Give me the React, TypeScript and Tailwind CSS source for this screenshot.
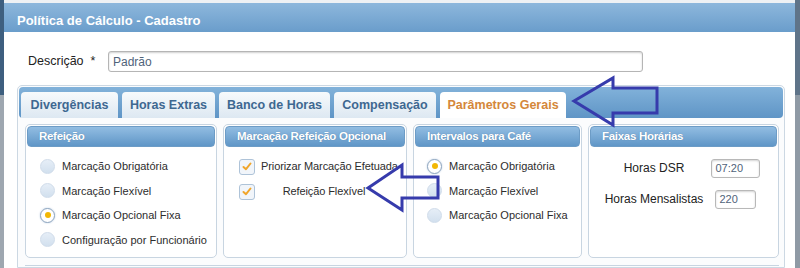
import React from "react";

const font = { fontFamily: '"Liberation Sans", Arial, sans-serif' };

const tabs = [
  { label: "Divergências", w: "w-[97px]" },
  { label: "Horas Extras", w: "w-[93px]" },
  { label: "Banco de Horas", w: "w-[111px]" },
  { label: "Compensação", w: "w-[102px]" },
  { label: "Parâmetros Gerais", w: "w-[126px]", active: true },
];

const Radio = ({ checked, label }: { checked?: boolean; label: string }) => (
  <div className="h-[24.5px] flex items-center gap-[7px]">
    {checked ? (
      <span className="w-[15px] h-[15px] rounded-full border border-[#8fa6bf] bg-white flex items-center justify-center shadow-[0_0_2px_#b9cbe0]">
        <span className="w-[6px] h-[6px] rounded-full bg-[#f2b705]" />
      </span>
    ) : (
      <span className="w-[15px] h-[15px] rounded-full border border-[#d0dcea] bg-gradient-to-b from-[#e6eef7] to-[#d2e0ee]" />
    )}
    <span className="text-[11px] text-[#2d2d2d] whitespace-nowrap">{label}</span>
  </div>
);

const Check = ({ label }: { label: string }) => (
  <div className="h-[25px] flex items-center">
    <span className="w-[16px] h-[16px] rounded-[3px] border border-[#aec3d8] bg-[#f1f5fa] flex items-center justify-center">
      <svg width="10" height="9" viewBox="0 0 10 9">
        <path d="M1.5 5 L4 7.2 L8.5 1.5" fill="none" stroke="#f0a52a" strokeWidth="2" strokeLinecap="round" strokeLinejoin="round" />
      </svg>
    </span>
    <span className="ml-[6px] w-[126px] text-center text-[11px] text-[#2d2d2d] whitespace-nowrap tracking-[-0.1px]">{label}</span>
  </div>
);

const Panel = ({ title, w, children }: { title: string; w: string; children: React.ReactNode }) => (
  <div className={`${w} h-[134px] border border-[#c8d5e1] rounded-[5px] p-[1px] bg-white`}>
    <div className="h-[21px] rounded-[4px] bg-gradient-to-b from-[#92bde2] to-[#5f96c7] border border-[#6d9cc6] flex items-center pl-[11px] text-[11.5px] tracking-[-0.3px] font-bold text-white whitespace-nowrap [text-shadow:0_0_1px_#4d7aa3]">
      {title}
    </div>
    {children}
  </div>
);

export default function App() {
  return (
    <div className="relative w-[800px] h-[268px] overflow-hidden flex" style={font}>
      <div className="w-[4px] flex flex-col">
        <div className="h-[95px] bg-[#3e5f7f]" />
        <div className="flex-1 bg-[#9ea7b0]" />
      </div>

      <div className="w-[791px] flex flex-col bg-white">
        <div className="h-[3px] bg-[#eef1f4]" />
        <div className="h-[30px] bg-gradient-to-b from-[#8db7dc] to-[#6a9dcb] flex items-center pl-[13px] pt-[6px] text-[13px] font-bold text-white">
          Política de Cálculo - Cadastro
        </div>

        <div className="mt-[19px] flex items-center pl-[24px]">
          <span className="w-[80px] text-[12.5px] text-[#222]">Descrição&nbsp; *</span>
          <div className="w-[535px] h-[21px] rounded-[3px] border border-[#b5b5b5] shadow-[inset_0_1px_2px_#d0d0d0] flex items-center pl-[4px] text-[12px] text-[#50637a]">
            Padrão
          </div>
        </div>

        <div className="mt-[13px] ml-[13px] w-[768px] flex-1 border border-[#ccd8e3] rounded-t-[5px] p-[1px] bg-[#fbfcfd]">
          <div className="h-[31px] rounded-[4px] bg-gradient-to-b from-[#82b2da] to-[#5f95c6] flex items-end gap-[4px] pl-[2px]">
            {tabs.map((t) => (
              <div
                key={t.label}
                className={`${t.w} h-[26px] rounded-t-[4px] flex items-center justify-center text-[12.5px] font-bold ${
                  t.active
                    ? "bg-white text-[#d4873a]"
                    : "bg-gradient-to-b from-[#f7fafc] to-[#dde8f2] text-[#3e6891]"
                }`}
              >
                {t.label}
              </div>
            ))}
          </div>

          <div className="flex gap-[6px] pl-[6px] pt-[6px]">
            <Panel title="Refeição" w="w-[192px]">
              <div className="pt-[7px] pl-[13px]">
                <Radio label="Marcação Obrigatória" />
                <Radio label="Marcação Flexível" />
                <Radio checked label="Marcação Opcional Fixa" />
                <Radio label="Configuração por Funcionário" />
              </div>
            </Panel>
            <Panel title="Marcação Refeição Opcional" w="w-[184px]">
              <div className="pt-[7px] pl-[14px]">
                <Check label="Priorizar Marcação Efetuada" />
                <Check label="Refeição Flexível" />
              </div>
            </Panel>
            <Panel title="Intervalos para Café" w="w-[169px]">
              <div className="pt-[7px] pl-[12px]">
                <Radio checked label="Marcação Obrigatória" />
                <Radio label="Marcação Flexível" />
                <Radio label="Marcação Opcional Fixa" />
              </div>
            </Panel>
            <Panel title="Faixas Horárias" w="w-[191px]">
              <div className="pt-[10px] pl-[9px] flex flex-col gap-[9px]">
                <div className="h-[22px] flex items-center">
                  <span className="w-[110px] text-center text-[12px] text-[#222]">Horas DSR</span>
                  <div className="w-[52px] flex justify-center">
                    <div className="w-[49px] h-[19px] rounded-[3px] border border-[#b8b8b8] shadow-[inset_0_1px_2px_#d4d4d4] flex items-center pl-[4px] text-[11px] text-[#50637a]">
                      07:20
                    </div>
                  </div>
                </div>
                <div className="h-[22px] flex items-center">
                  <span className="w-[110px] text-center text-[12px] text-[#222] whitespace-nowrap">Horas Mensalistas</span>
                  <div className="w-[52px] flex justify-center">
                    <div className="w-[41px] h-[19px] rounded-[3px] border border-[#b8b8b8] shadow-[inset_0_1px_2px_#d4d4d4] flex items-center pl-[4px] text-[11px] text-[#50637a]">
                      220
                    </div>
                  </div>
                </div>
              </div>
            </Panel>
          </div>
          <div className="mt-[7px] ml-[6px] mr-[4px] border-t border-[#c8d5e1]" />
        </div>
      </div>

      <div className="w-[5px] flex flex-col">
        <div className="h-[95px] bg-[#5f7489]" />
        <div className="flex-1 bg-[#8f9aa5]" />
      </div>

      <svg className="absolute left-0 top-0 pointer-events-none" width="800" height="268">
        <polygon
          points="574,101 613,78 613,88 657,88 657,113 613,113 613,125"
          fill="none"
          stroke="#363bac"
          strokeWidth="3"
          strokeLinejoin="miter"
        />
        <polygon
          points="368,188 402,165 402,177 438,177 438,198 402,198 402,210"
          fill="none"
          stroke="#363bac"
          strokeWidth="3"
          strokeLinejoin="miter"
        />
      </svg>
    </div>
  );
}
